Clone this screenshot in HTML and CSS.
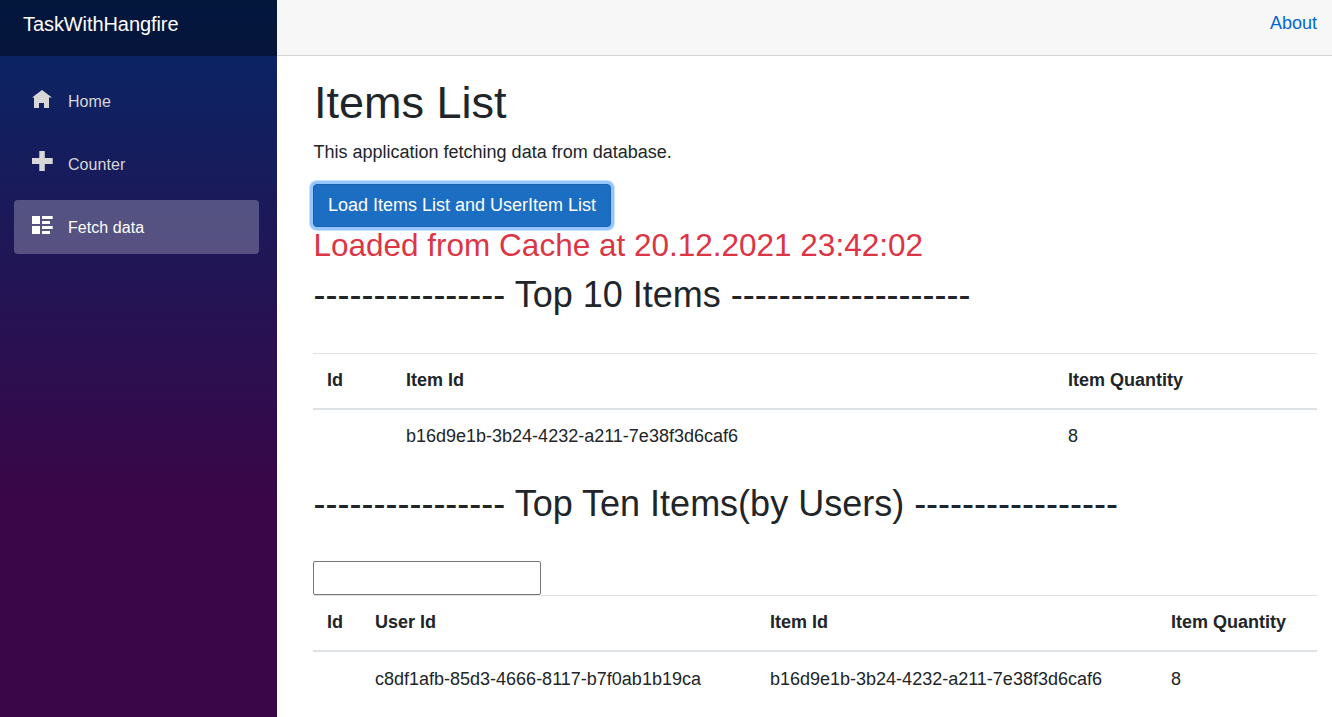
FILE: index.html
```
<!DOCTYPE html>
<html lang="en">
<head>
<meta charset="utf-8">
<title>TaskWithHangfire</title>
<link rel="stylesheet" href="styles.css">
</head>
<body>
<div class="page">
  <aside class="sidebar">
    <div class="brand"><a class="brand-link">TaskWithHangfire</a></div>
    <nav class="nav">
      <a class="nav-link"><svg class="icon" viewBox="0 0 21 20"><path d="M10 0L0 7.500h2V18h5v-5h5v5h5V7.500h3z"/></svg><span>Home</span></a>
      <a class="nav-link"><svg class="icon icon-plus" viewBox="0 0 21 20"><path d="M7.300 0h5.500v7h7.900v6h-7.900v7H7.300v-7H0V7h7.300z"/></svg><span>Counter</span></a>
      <a class="nav-link active"><svg class="icon" viewBox="0 0 21 20"><path d="M0 0h8v8H0zM0 10h8v8H0zM10 0h10.700v3H10zM10 5h8v3h-8zM10 10h10.700v3H10zM10 15h8v3h-8z"/></svg><span>Fetch data</span></a>
    </nav>
  </aside>
  <div class="main">
    <header class="top-row"><a class="about">About</a></header>
    <main class="content">
      <h1>Items List</h1>
      <p class="intro">This application fetching data from database.</p>
      <button class="btn">Load Items List and UserItem List</button>
      <h3 class="status">Loaded from Cache at 20.12.2021 23:42:02</h3>
      <h2 class="heading">---------------- Top 10 Items --------------------</h2>
      <table class="table items">
        <colgroup><col class="c-id"><col class="c-item"><col></colgroup>
        <thead><tr><th>Id</th><th>Item Id</th><th>Item Quantity</th></tr></thead>
        <tbody><tr><td></td><td>b16d9e1b-3b24-4232-a211-7e38f3d6caf6</td><td>8</td></tr></tbody>
      </table>
      <h2 class="heading">---------------- Top Ten Items(by Users) -----------------</h2>
      <input class="search" type="text" aria-label="User">
      <table class="table users">
        <colgroup><col class="c-id"><col class="c-user"><col class="c-item"><col></colgroup>
        <thead><tr><th>Id</th><th>User Id</th><th>Item Id</th><th>Item Quantity</th></tr></thead>
        <tbody><tr><td></td><td>c8df1afb-85d3-4666-8117-b7f0ab1b19ca</td><td>b16d9e1b-3b24-4232-a211-7e38f3d6caf6</td><td>8</td></tr></tbody>
      </table>
    </main>
  </div>
</div>
</body>
</html>
```
FILE: styles.css
```
* { box-sizing: border-box; }
html, body { height: 100%; overflow: hidden; }
body {
  margin: 0;
  font: 18px/27px "Liberation Sans", Arial, sans-serif;
  color: #212529;
  background: #fff;
}
.page { display: flex; height: 717px; }
.sidebar {
  flex: 0 0 277px;
  background: linear-gradient(180deg, #052767 0%, #3a0647 70%);
}
.brand {
  height: 56px;
  padding: 9px 0 0 23px;
  background: rgba(0, 0, 0, .4);
}
.brand-link { font-size: 20px; line-height: 30px; color: #fff; letter-spacing: -.08px; }
.nav { display: flex; flex-direction: column; gap: 9px; padding: 18px 18px 0 14px; }
.nav-link {
  display: flex;
  align-items: center;
  height: 54px;
  padding-left: 18px;
  border-radius: 4px;
  font-size: 16px;
  letter-spacing: .06px;
  color: #d7d7d7;
}
.nav-link.active { background: rgba(255, 255, 255, .25); color: #fff; }
.icon { width: 21px; height: 20px; margin: -2px 15px 0 0; fill: currentColor; }
.icon-plus { margin-top: -6px; }
.main { flex: 1; min-width: 0; }
.top-row {
  display: flex;
  justify-content: flex-end;
  height: 56px;
  padding: 10px 15px 0 0;
  background: #f7f7f7;
  border-bottom: 1px solid #d6d5d5;
}
.about { color: #0366d6; }
.content { padding: 20px 15px 0 36px; }
h1, h2, h3, p { margin: 0; font-weight: 400; }
h1 { padding-left: 1px; font-size: 45px; line-height: 54px; }
.intro { margin: 9px 0 18px; padding-left: .5px; }
.btn {
  display: block;
  width: 298px;
  height: 43px;
  padding: 0;
  border: 1px solid #1861ac;
  border-radius: 4px;
  background: #1b6ec2;
  color: #fff;
  font: inherit;
  box-shadow: 0 0 0 3px #94c5fe, 0 0 0 4px #c8e1ff;
}
.status { padding: 0 0 1px .5px; font-size: 31.5px; line-height: 36px; color: #dc3545; }
.heading { margin-top: 9px; padding-left: .5px; font-size: 36px; line-height: 43px; }
.table { width: 100%; table-layout: fixed; border-collapse: collapse; }
.table th, .table td { height: 56px; padding: 0 14px; border-top: 1px solid #dee2e6; text-align: left; }
.table th { border-bottom: 2px solid #dee2e6; }
.items { margin: 37px 0 18px; }
.items th, .items td { height: 55px; }
.items .c-id { width: 79px; }
.items .c-item { width: 662px; }
.search { display: block; width: 228px; height: 34px; margin-top: 36px; border: 1px solid #767676; border-radius: 2px; }
.users .c-id { width: 48px; }
.users .c-user { width: 395px; }
.users .c-item { width: 401px; }
```
